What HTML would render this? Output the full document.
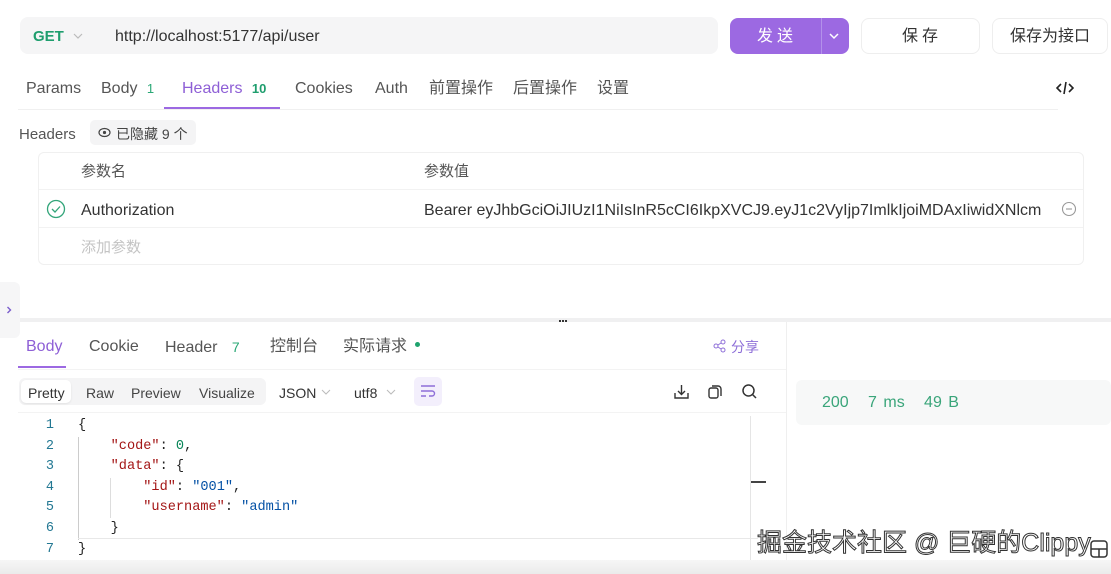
<!DOCTYPE html>
<html><head><meta charset="utf-8"><style>
*{margin:0;padding:0;box-sizing:border-box}
body{width:1111px;height:574px;overflow:hidden;background:#fff;font-family:"Liberation Sans","Noto Sans CJK SC",sans-serif;color:#333;position:relative}
.a{position:absolute;white-space:nowrap;line-height:20px}
.t{transform:translateY(2px)}
.mono{font-family:"Liberation Mono","DejaVu Sans Mono",monospace}
</style></head><body>
<!-- URL bar -->
<div class="a" style="left:20px;top:17px;width:698px;height:37px;background:#f5f5f6;border-radius:8px"></div>
<div class="a t" style="left:33px;top:25px;font-size:15px;font-weight:bold;color:#1f9e6e">GET</div>
<svg class="a" style="left:72px;top:32px" width="12" height="8"><path d="M2 2l4 4 4-4" stroke="#bbb" stroke-width="1.2" fill="none"/></svg>
<div class="a t" style="left:115px;top:25px;font-size:16px;color:#333">http://localhost:5177/api/user</div>
<div class="a" style="left:730px;top:18px;width:119px;height:36px;background:#9c69e2;border-radius:8px"></div>
<div class="a" style="left:821px;top:18px;width:1px;height:36px;background:#b391ea"></div>
<div class="a t" style="left:757px;top:25px;font-size:16px;color:#fff;letter-spacing:4px">发送</div>
<svg class="a" style="left:828px;top:31px" width="12" height="10"><path d="M2 3l4 4 4-4" stroke="#fff" stroke-width="1.5" fill="none"/></svg>
<div class="a" style="left:861px;top:18px;width:119px;height:36px;border:1px solid #eee;border-radius:8px"></div>
<div class="a t" style="left:902px;top:25px;font-size:16px;letter-spacing:4px">保存</div>
<div class="a" style="left:992px;top:18px;width:116px;height:36px;border:1px solid #eee;border-radius:8px"></div>
<div class="a t" style="left:1010px;top:25px;font-size:16px">保存为接口</div>
<!-- tabs -->
<div class="a t" style="left:26px;top:77px;font-size:16px;color:#555">Params</div>
<div class="a t" style="left:101px;top:77px;font-size:16px;color:#555">Body <span style="color:#2aa876;font-size:13px;margin-left:5px">1</span></div>
<div class="a t" style="left:182px;top:77px;font-size:16px;color:#8e5fd6">Headers <span style="color:#1f9e6e;font-size:13px;font-weight:bold;margin-left:5px">10</span></div>
<div class="a t" style="left:295px;top:77px;font-size:16px;color:#555">Cookies</div>
<div class="a t" style="left:375px;top:77px;font-size:16px;color:#555">Auth</div>
<div class="a t" style="left:429px;top:77px;font-size:16px;color:#555">前置操作</div>
<div class="a t" style="left:513px;top:77px;font-size:16px;color:#555">后置操作</div>
<div class="a t" style="left:597px;top:77px;font-size:16px;color:#555">设置</div>
<svg class="a" style="left:1056px;top:80px" width="18" height="16"><path d="M5 4L1 8l4 4M13 4l4 4-4 4M10 2L8 14" stroke="#222" stroke-width="1.6" fill="none"/></svg>
<div class="a" style="left:18px;top:109px;width:1040px;height:1px;background:#f0f0f0"></div>
<div class="a" style="left:164px;top:107px;width:116px;height:2px;background:#9c69e2"></div>
<div class="a t" style="left:19px;top:123px;font-size:15px;color:#555">Headers</div>
<div class="a" style="left:90px;top:120px;width:106px;height:25px;background:#f4f4f5;border-radius:5px"></div>
<svg class="a" style="left:98px;top:127px" width="13" height="11"><ellipse cx="6.5" cy="5.5" rx="5.5" ry="4" stroke="#444" stroke-width="1.2" fill="none"/><circle cx="6.5" cy="5.5" r="1.6" fill="#444"/></svg>
<div class="a t" style="left:116px;top:122px;font-size:14px;color:#444">已隐藏 9 个</div>
<!-- table -->
<div class="a" style="left:38px;top:152px;width:1046px;height:113px;border:1px solid #f0f0f0;border-radius:6px"></div>
<div class="a" style="left:39px;top:189px;width:1044px;height:1px;background:#f2f2f2"></div>
<div class="a" style="left:39px;top:227px;width:1044px;height:1px;background:#f2f2f2"></div>
<div class="a t" style="left:81px;top:160px;font-size:15px;color:#555">参数名</div>
<div class="a t" style="left:424px;top:160px;font-size:15px;color:#555">参数值</div>
<svg class="a" style="left:46px;top:199px" width="20" height="20"><circle cx="10" cy="10" r="8.5" stroke="#33a57a" stroke-width="1.3" fill="none"/><path d="M6 10l3 3 5-5.5" stroke="#33a57a" stroke-width="1.3" fill="none"/></svg>
<div class="a t" style="left:81px;top:199px;font-size:16px;color:#333">Authorization</div>
<div class="a t" style="left:424px;top:199px;font-size:16px;color:#333;width:628px;overflow:hidden">Bearer eyJhbGciOiJIUzI1NiIsInR5cCI6IkpXVCJ9.eyJ1c2VyIjp7ImlkIjoiMDAxIiwidXNlcm</div>
<svg class="a" style="left:1061px;top:201px" width="16" height="16"><circle cx="8" cy="8" r="6.5" stroke="#999" stroke-width="1.1" fill="none"/><path d="M5 8h6" stroke="#999" stroke-width="1.1"/></svg>
<div class="a t" style="left:81px;top:236px;font-size:15px;color:#c4c4c4">添加参数</div>
<!-- sidebar toggle -->
<div class="a" style="left:0;top:282px;width:20px;height:56px;background:#f6f6f7;border-radius:0 6px 6px 0"></div>
<svg class="a" style="left:6px;top:306px" width="6" height="8"><path d="M1.5 1l3 3-3 3" stroke="#7a5ccc" stroke-width="1.4" fill="none"/></svg>
<!-- separator -->
<div class="a" style="left:20px;top:318px;width:1091px;height:4px;background:#f0f0f1"></div>
<div class="a" style="left:559px;top:320px;width:2px;height:2px;background:#333;box-shadow:3px 0 #333,6px 0 #333"></div>
<div class="a" style="left:786px;top:322px;width:1px;height:252px;background:#efefef"></div>
<!-- response tabs -->
<div class="a t" style="left:26px;top:335px;font-size:16px;color:#8e5fd6">Body</div>
<div class="a" style="left:18px;top:366px;width:48px;height:2px;background:#9c69e2"></div>
<div class="a t" style="left:89px;top:335px;font-size:16px;color:#555">Cookie</div>
<div class="a t" style="left:165px;top:335px;font-size:16px;color:#555">Header <span style="color:#2aa876;font-size:14px;margin-left:10px">7</span></div>
<div class="a t" style="left:270px;top:335px;font-size:16px;color:#555">控制台</div>
<div class="a t" style="left:343px;top:335px;font-size:16px;color:#555">实际请求</div>
<div class="a" style="left:415px;top:342px;width:5px;height:5px;border-radius:50%;background:#1fa36e"></div>
<svg class="a" style="left:713px;top:339px" width="14" height="14"><circle cx="10" cy="3" r="2" stroke="#8e6fd8" fill="none"/><circle cx="3" cy="7" r="2" stroke="#8e6fd8" fill="none"/><circle cx="10" cy="11" r="2" stroke="#8e6fd8" fill="none"/><path d="M5 6l3-2M5 8l3 2" stroke="#8e6fd8"/></svg>
<div class="a t" style="left:731px;top:335px;font-size:14px;color:#8e6fd8">分享</div>
<div class="a" style="left:18px;top:369px;width:768px;height:1px;background:#f3f3f3"></div>
<!-- toolbar -->
<div class="a" style="left:19px;top:378px;width:247px;height:27px;background:#f4f4f5;border-radius:6px"></div>
<div class="a" style="left:21px;top:380px;width:50px;height:23px;background:#fff;border-radius:5px;box-shadow:0 1px 2px rgba(0,0,0,.08)"></div>
<div class="a t" style="left:28px;top:381px;font-size:14px;color:#333">Pretty</div>
<div class="a t" style="left:86px;top:381px;font-size:14px;color:#444">Raw</div>
<div class="a t" style="left:131px;top:381px;font-size:14px;color:#444">Preview</div>
<div class="a t" style="left:199px;top:381px;font-size:14px;color:#444">Visualize</div>
<div class="a t" style="left:279px;top:381px;font-size:14px;color:#333">JSON</div>
<svg class="a" style="left:321px;top:389px" width="10" height="6"><path d="M1 1l4 4 4-4" stroke="#bbb" fill="none"/></svg>
<div class="a t" style="left:354px;top:381px;font-size:14px;color:#333">utf8</div>
<svg class="a" style="left:386px;top:389px" width="10" height="6"><path d="M1 1l4 4 4-4" stroke="#bbb" fill="none"/></svg>
<div class="a" style="left:414px;top:377px;width:28px;height:29px;background:#f3effc;border-radius:5px"></div>
<svg class="a" style="left:420px;top:384px" width="16" height="14"><path d="M1 2h14M1 7h11a2.5 2.5 0 0 1 0 5H9M1 12h5" stroke="#8e6fd8" stroke-width="1.4" fill="none"/></svg>
<svg class="a" style="left:673px;top:383px" width="17" height="17"><path d="M8.5 2v9M5 8l3.5 3.5L12 8M2 10v5h13v-5" stroke="#333" stroke-width="1.4" fill="none"/></svg>
<svg class="a" style="left:707px;top:383px" width="17" height="17"><rect x="2" y="5" width="9" height="10" rx="2" stroke="#333" stroke-width="1.4" fill="none"/><path d="M5 3h6a3 3 0 0 1 3 3v7" stroke="#333" stroke-width="1.4" fill="none"/></svg>
<svg class="a" style="left:741px;top:383px" width="17" height="17"><circle cx="7.5" cy="7.5" r="5.5" stroke="#333" stroke-width="1.5" fill="none"/><path d="M11.5 11.5l3.5 3.5" stroke="#333" stroke-width="1.5"/></svg>
<div class="a" style="left:18px;top:412px;width:768px;height:1px;background:#f3f3f3"></div>
<!-- code -->
<div class="a mono" style="left:40px;top:416px;font-size:13.5px;line-height:20.6px;color:#237893;text-align:right;width:14px">1<br>2<br>3<br>4<br>5<br>6<br>7</div>
<div class="a" style="left:78px;top:437px;width:1px;height:103px;background:#ccc"></div>
<div class="a" style="left:110px;top:478px;width:1px;height:40px;background:#ddd"></div>
<div class="a mono" style="left:78px;top:416px;font-size:13.6px;line-height:20.6px;color:#222;white-space:pre">{
    <span style="color:#a31515">"code"</span>: <span style="color:#098658">0</span>,
    <span style="color:#a31515">"data"</span>: {
        <span style="color:#a31515">"id"</span>: <span style="color:#0451a5">"001"</span>,
        <span style="color:#a31515">"username"</span>: <span style="color:#0451a5">"admin"</span>
    }
}</div>
<div class="a" style="left:78px;top:538px;width:680px;height:1px;background:#e8e8e8"></div>
<div class="a" style="left:750px;top:416px;width:1px;height:150px;background:#e5e5e5"></div>
<div class="a" style="left:751px;top:481px;width:15px;height:2px;background:#444"></div>
<!-- status -->
<div class="a" style="left:796px;top:380px;width:315px;height:45px;background:#f7f8f8;border-radius:6px"></div>
<div class="a t" style="left:822px;top:391px;font-size:16px;color:#3aa57a;word-spacing:2px">200 &nbsp; 7 ms &nbsp; 49 B</div>
<!-- bottom -->
<div class="a" style="left:0;top:560px;width:1111px;height:14px;background:linear-gradient(#f6f6f6,#ebebeb)"></div>
<div class="a" style="left:757px;top:528px;font-size:25px;line-height:30px;color:#fff;-webkit-text-stroke:1px #333">掘金技术社区 @ 巨硬的Clippy</div>
<svg class="a" style="left:1090px;top:540px" width="18" height="18"><rect x="1" y="1" width="16" height="16" rx="3" stroke="#333" stroke-width="1.5" fill="#fff"/><path d="M1 9h16M9 9v8" stroke="#333" stroke-width="1.5"/></svg>
</body></html>
